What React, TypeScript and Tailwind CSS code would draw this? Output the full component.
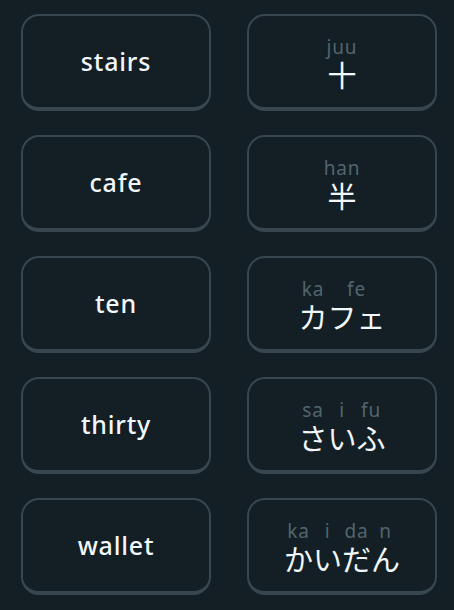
import React from 'react'

type Token = { romaji: string; kana: string }

const rows: { word: string; tokens: Token[] }[] = [
  { word: 'stairs', tokens: [{ romaji: 'juu', kana: '十' }] },
  { word: 'cafe', tokens: [{ romaji: 'han', kana: '半' }] },
  {
    word: 'ten',
    tokens: [
      { romaji: 'ka', kana: 'カ' },
      { romaji: 'fe', kana: 'フェ' }
    ]
  },
  {
    word: 'thirty',
    tokens: [
      { romaji: 'sa', kana: 'さ' },
      { romaji: 'i', kana: 'い' },
      { romaji: 'fu', kana: 'ふ' }
    ]
  },
  {
    word: 'wallet',
    tokens: [
      { romaji: 'ka', kana: 'か' },
      { romaji: 'i', kana: 'い' },
      { romaji: 'da', kana: 'だ' },
      { romaji: 'n', kana: 'ん' }
    ]
  }
]

const card =
  'flex h-[97px] w-[190px] items-center justify-center rounded-[18px] border-2 border-b-4 border-[#37464f] bg-[#131f24]'

export default function App() {
  return (
    <div
      className="min-h-[610px] w-[454px] bg-[#131f24] pl-[21px] pt-[14px]"
      style={{ fontFamily: '"Noto Sans", "Noto Sans CJK JP", sans-serif' }}
    >
      <div className="flex flex-col gap-[24px]">
        {rows.map((row, i) => (
          <div key={i} className="flex gap-[36px]">
            {/* English word */}
            <div className={card}>
              <span className="text-[25px] font-medium leading-none tracking-[0.8px] text-[#f1f7fb]">{row.word}</span>
            </div>

            {/* Japanese with romaji */}
            <div className={card}>
              <div className="flex items-end pt-[4px]">
                {row.tokens.map((t, j) => (
                  <div key={j} className="flex flex-col items-center gap-[4px]">
                    <span className="text-[19px] leading-[20px] tracking-[0.8px] text-[#52656d]">{t.romaji}</span>
                    <span className="text-[29px] leading-[30px] text-[#f1f7fb]">{t.kana}</span>
                  </div>
                ))}
              </div>
            </div>
          </div>
        ))}
      </div>
    </div>
  )
}
